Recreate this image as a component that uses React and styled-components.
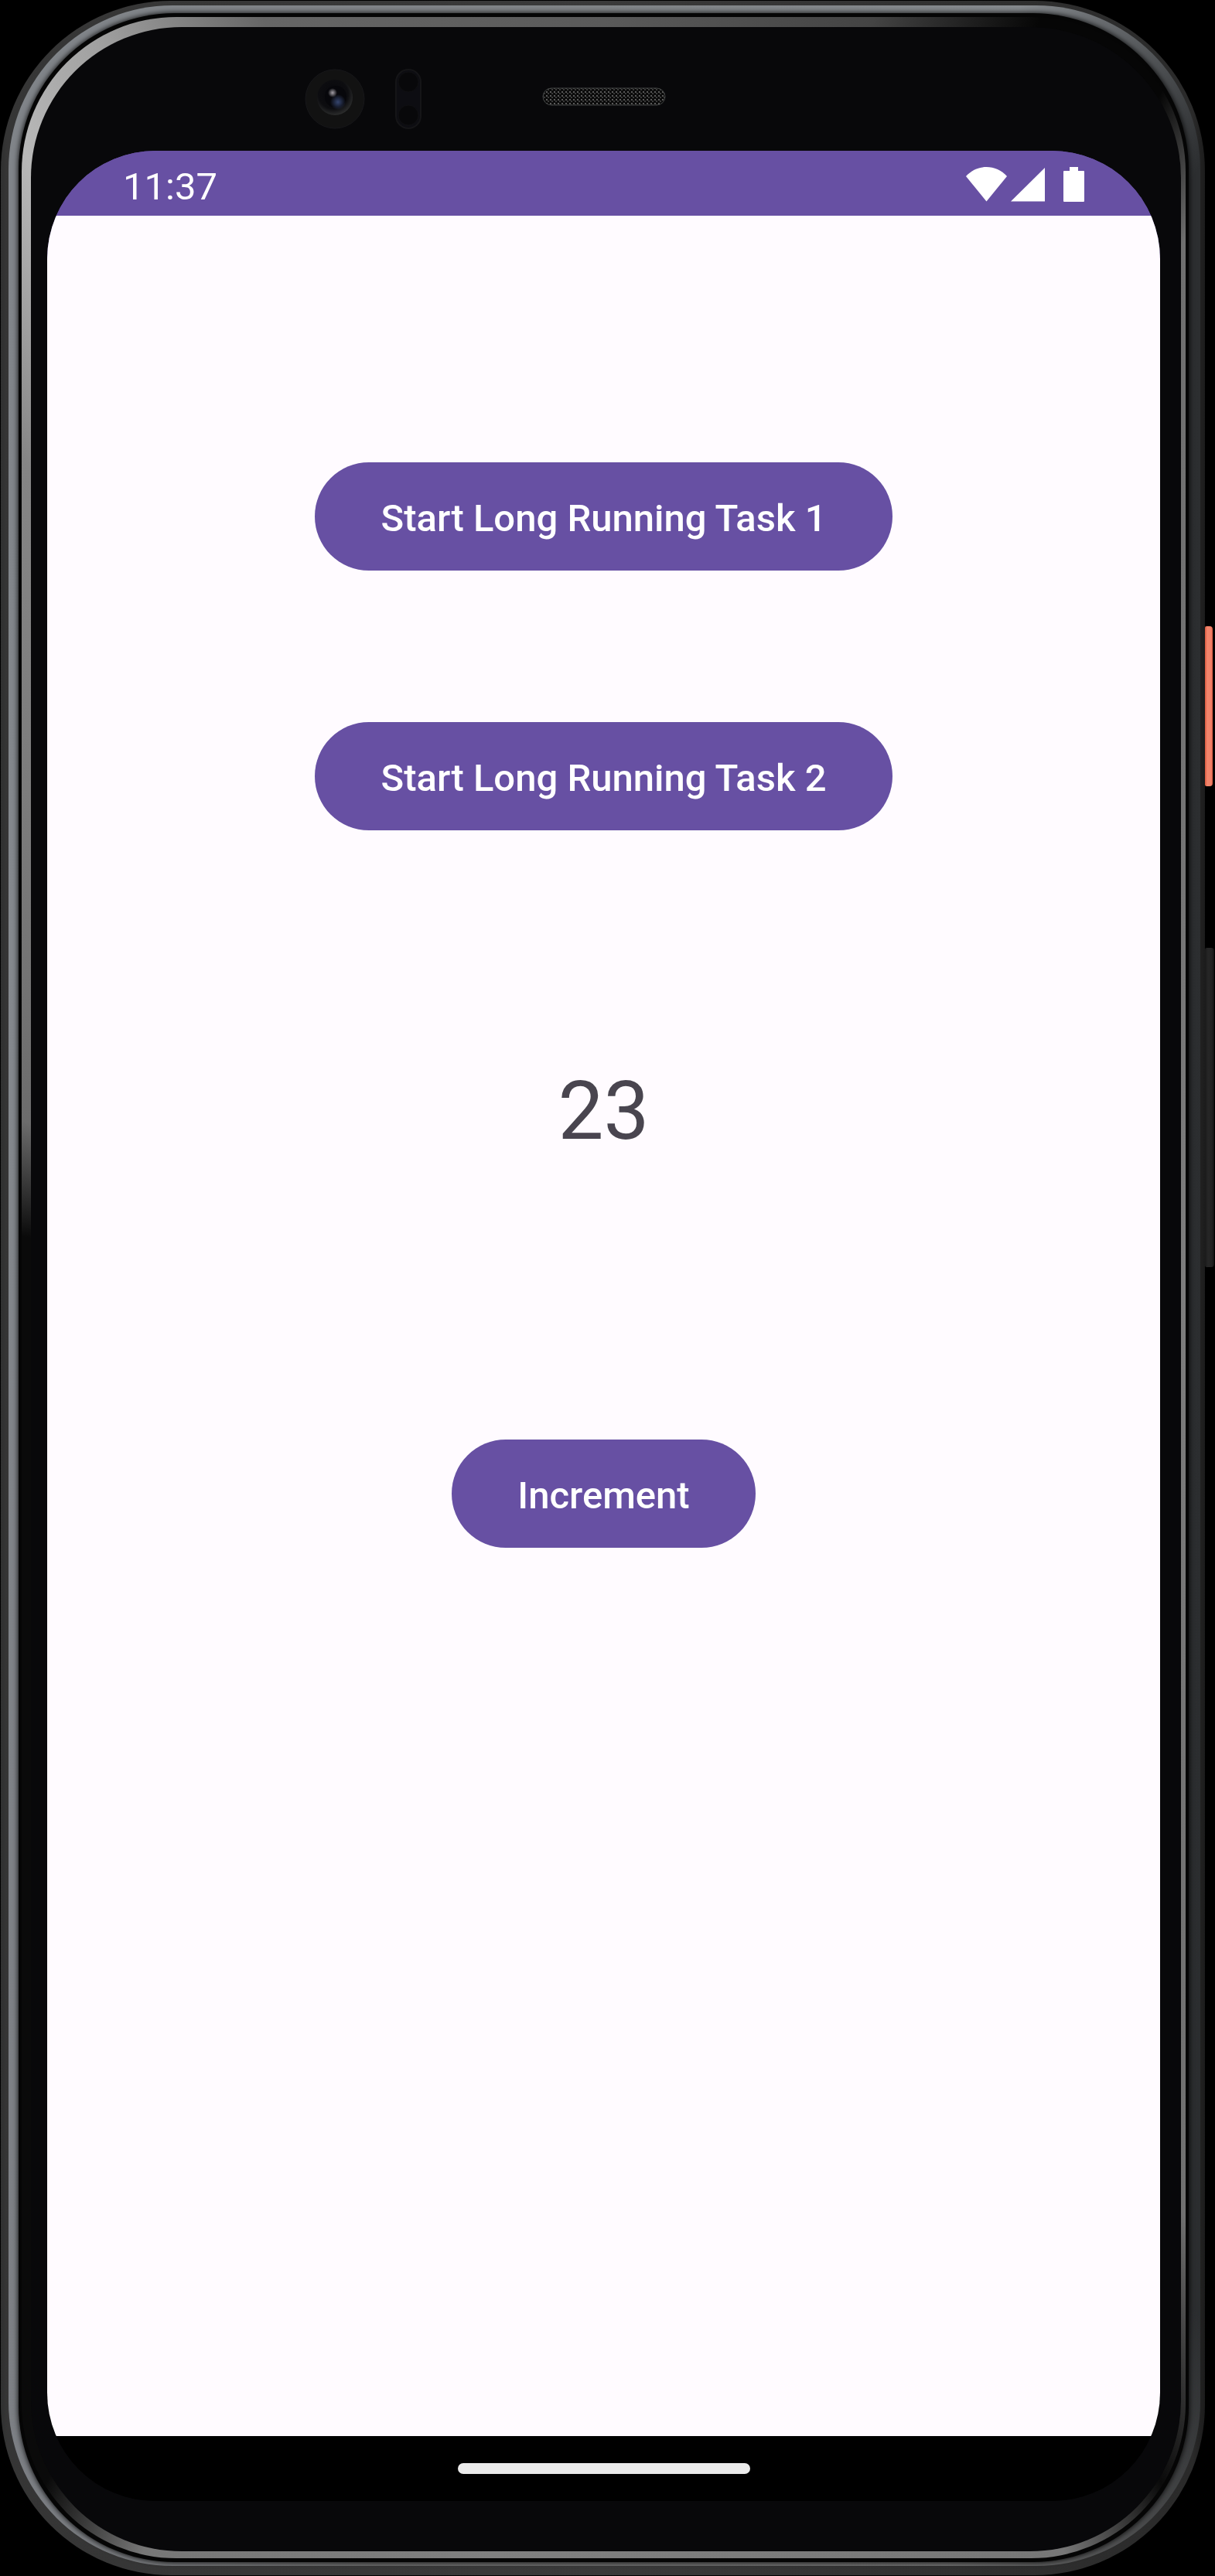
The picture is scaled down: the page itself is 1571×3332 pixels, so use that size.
import React, { useState } from "react";
import styled, { createGlobalStyle } from "styled-components";

const GlobalStyle = createGlobalStyle`
  *, *::before, *::after { box-sizing: border-box; }
  html, body { margin: 0; background: #000; }
  body { font-family: Roboto, "Noto Sans", sans-serif; }
`;

const Stage = styled.div`
  display: flex;
  min-height: 100vh;
  padding: 1px 13px 1px 1px;
  background: #000;
`;

const Layer = styled.div`
  display: flex;
  flex: 1;
  min-width: 0;
`;

const Shell = styled(Layer)`
  position: relative;
  padding: 6px 6px 12px 10px;
  border-radius: 220px;
  background: linear-gradient(to right, #2f3030, #353535 8px, #3a3a3a 50%, #2a2a2a 99%, #1c1c1c);
`;

const SteelBand = styled(Layer)`
  padding: 10px 15px 5px 13px;
  border-radius: 212px;
  background: conic-gradient(#808487 0deg, #85898d 18deg, #5b5e61 23deg, #2c2e30 28deg, #2b2d2f 150deg, #707070 165deg, #6b6b6b 190deg, #7c7f84 205deg, #84888d 300deg, #808489 330deg, #808487 360deg);
`;

const Groove = styled(Layer)`
  padding: 5px 4px;
  border-radius: 202px;
  background: #050505;
  box-shadow: 0 0 6px 1px rgba(0, 0, 0, 0.8);
`;

const InnerRing = styled(Layer)`
  padding: 13px 6px 9px 12px;
  border-radius: 200px;
  background: conic-gradient(#5a5a5a 0deg, #444 12deg, #060606 19deg, #060606 25deg, #6f6f6f 29deg, #7d7d7d 90deg, #707070 148deg, #0a0a0a 155deg, #777 160deg, #808080 185deg, #777 200deg, #0a0a0a 205deg, #0a0a0a 275deg, #6c6c6c 286deg, #858585 325deg, #b8b8b8 333deg, #a0a0a0 338deg, #666 345deg, #5a5a5a 360deg);
`;

const Glass = styled(Layer)`
  flex-direction: column;
  padding: 0 27px 65px 21px;
  border-radius: 195px;
  background: #08080a;
`;

const SensorStrip = styled.div`
  display: grid;
  grid-template-columns: 1fr auto 1fr;
  align-items: center;
  height: 160px;
`;

const Sensors = styled.div`
  display: flex;
  align-items: center;
  justify-content: flex-end;
  gap: 39px;
  padding: 26px 156px 0 0;
`;

const Mesh = styled.svg`
  display: block;
  margin-top: 20px;
`;

const SideKey = styled.div`
  position: absolute;
  left: 100%;
  top: ${(p) => p.$top}px;
  width: ${(p) => p.$width}px;
  height: ${(p) => p.$height}px;
  border-radius: 2px 4px 4px 2px;
  background: ${(p) => p.$fill};
`;

const Screen = styled.div`
  display: flex;
  flex: 1;
  flex-direction: column;
  overflow: hidden;
  border-radius: 140px;
  background: linear-gradient(#6750a3 50%, #000 50%);
`;

const StatusBar = styled.header`
  display: flex;
  align-items: center;
  justify-content: space-between;
  height: 84px;
  padding: 0 98px;
  background: #6750a3;
  color: #fff;
`;

const Clock = styled.time`
  padding-top: 10px;
  font-size: 49px;
  line-height: 56px;
`;

const StatusIcons = styled.div`
  display: flex;
  align-items: center;
  padding-top: 2px;
  svg { display: block; }
`;

const Content = styled.main`
  display: flex;
  flex: 1;
  flex-direction: column;
  align-items: center;
  padding-top: 319px;
  background: #fffbff;
`;

const Actions = styled.div`
  display: flex;
  flex-direction: column;
  align-items: center;
  gap: 196px;
`;

const FilledButton = styled.button`
  height: 140px;
  padding: 6px 85px 0;
  border: 0;
  border-radius: 70px;
  background: #6750a3;
  color: #fff;
  font-family: inherit;
  font-size: 49px;
  font-weight: 500;
  line-height: 56px;
  white-space: nowrap;
  cursor: pointer;
`;

const Counter = styled.output`
  margin: 302px 0 362px;
  color: #49454f;
  font-size: 105px;
  line-height: 124px;
`;

const NavBar = styled.footer`
  display: flex;
  align-items: center;
  justify-content: center;
  height: 84px;
  background: #000;
`;

const HomeHandle = styled.div`
  width: 378px;
  height: 14px;
  border-radius: 7px;
  background: #ebebeb;
`;

function Camera() {
  return (
    <svg width="78" height="78" viewBox="0 0 78 78" aria-hidden="true">
      <defs>
        <radialGradient id="lens" cx="0.45" cy="0.4" r="0.6">
          <stop offset="0" stopColor="#08080c" />
          <stop offset="0.7" stopColor="#0d0d10" />
          <stop offset="1" stopColor="#2b2c2c" />
        </radialGradient>
        <radialGradient id="blue">
          <stop offset="0" stopColor="#35456e" />
          <stop offset="1" stopColor="#35456e" stopOpacity="0" />
        </radialGradient>
        <radialGradient id="glint">
          <stop offset="0" stopColor="#a5a1a8" />
          <stop offset="1" stopColor="#a5a1a8" stopOpacity="0" />
        </radialGradient>
      </defs>
      <circle cx="39" cy="39" r="38" fill="#121212" stroke="#17171a" />
      <circle cx="39" cy="37" r="23" fill="url(#lens)" />
      <circle cx="40" cy="36" r="14" fill="#07070b" />
      <circle cx="43" cy="43" r="10" fill="url(#blue)" />
      <circle cx="36" cy="31" r="6" fill="url(#glint)" />
    </svg>
  );
}

function ProximitySensor() {
  return (
    <svg width="34" height="78" viewBox="0 0 34 78" aria-hidden="true">
      <rect x="1" y="1" width="32" height="76" rx="16" fill="#0d0d12" stroke="#151517" strokeWidth="2" />
      <circle cx="17" cy="17" r="13" fill="#08080a" stroke="#101012" />
      <circle cx="17" cy="60" r="13" fill="#08080a" stroke="#101012" />
    </svg>
  );
}

function Earpiece() {
  return (
    <Mesh width="160" height="24" viewBox="0 0 160 24" aria-hidden="true">
      <defs>
        <pattern id="mesh" width="5" height="5" patternUnits="userSpaceOnUse">
          <rect width="5" height="5" fill="#0b0b0b" />
          <rect width="2" height="2" fill="#5a5a5a" />
          <rect x="2" y="2" width="2" height="2" fill="#3a3a3a" />
        </pattern>
      </defs>
      <rect x="1" y="1" width="158" height="22" rx="11" fill="url(#mesh)" stroke="#3f4141" />
    </Mesh>
  );
}

function WifiIcon() {
  return (
    <svg width="53" height="45" viewBox="0 0 53 45" aria-hidden="true">
      <path d="M0 12 C14 -4 39 -4 53 12 L26.500 44.500 Z" fill="#fff" />
    </svg>
  );
}

function SignalIcon() {
  return (
    <svg width="54" height="45" viewBox="0 0 54 45" aria-hidden="true">
      <path d="M5 44.500 L49 1 V44.500 Z" fill="#fff" />
    </svg>
  );
}

function BatteryIcon() {
  return (
    <svg width="46" height="45" viewBox="0 0 46 45" aria-hidden="true">
      <path d="M27 0 H38 V5 H45 Q46 5 46 6 V44 Q46 45 45 45 H20 Q19 45 19 44 V6 Q19 5 20 5 H27 Z" fill="#fff" />
    </svg>
  );
}

export default function App() {
  const [count, setCount] = useState(23);

  return (
    <>
      <GlobalStyle />
      <Stage>
        <Shell>
          <SideKey $top={809} $width={10} $height={207} $fill="linear-gradient(to right, #d9573c, #f4866c 3px, #f08068 8px, #d85c42)" />
          <SideKey $top={1225} $width={12} $height={413} $fill="linear-gradient(to right, #1a1a1a, #262626 4px, #222 9px, #111)" />
          <SteelBand>
            <Groove>
              <InnerRing>
                <Glass>
                  <SensorStrip>
                    <Sensors>
                      <Camera />
                      <ProximitySensor />
                    </Sensors>
                    <Earpiece />
                  </SensorStrip>
                  <Screen>
                    <StatusBar>
                      <Clock>11:37</Clock>
                      <StatusIcons>
                        <WifiIcon />
                        <SignalIcon />
                        <BatteryIcon />
                      </StatusIcons>
                    </StatusBar>
                    <Content>
                      <Actions>
                        <FilledButton type="button">Start Long Running Task 1</FilledButton>
                        <FilledButton type="button">Start Long Running Task 2</FilledButton>
                      </Actions>
                      <Counter>{count}</Counter>
                      <FilledButton type="button" onClick={() => setCount(count + 1)}>
                        Increment
                      </FilledButton>
                    </Content>
                    <NavBar>
                      <HomeHandle />
                    </NavBar>
                  </Screen>
                </Glass>
              </InnerRing>
            </Groove>
          </SteelBand>
        </Shell>
      </Stage>
    </>
  );
}
